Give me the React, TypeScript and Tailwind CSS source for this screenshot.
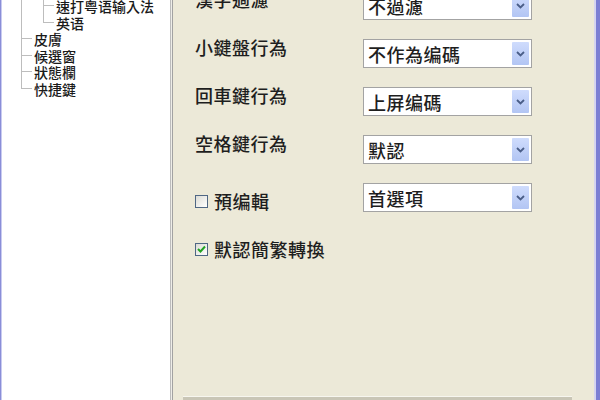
import React from "react";

const LINE = "border-[#bdbdbd]";

function TreeRow({ level, text, last }: { level: 1 | 2; text: string; last?: boolean }) {
  return (
    <div className="flex h-[16.5px] items-stretch">
      {level === 2 && <div className={`ml-[19px] w-[22px] border-l ${LINE}`} />}
      <div className={`${level === 1 ? "ml-[19px]" : ""} flex w-[12px] flex-col`}>
        <div className={`h-1/2 w-[11px] border-b border-l ${LINE}`} />
        <div className={`h-1/2 ${last ? "" : `border-l ${LINE}`}`} />
      </div>
      <span className="ml-[1px] whitespace-nowrap text-[14px] font-medium leading-[16.5px] text-[#1a1a1a]">{text}</span>
    </div>
  );
}

function Combo({ text }: { text: string }) {
  return (
    <div className="flex h-[29px] w-[169px] items-center border border-[#a3a3a3] bg-white pl-[4px] pr-[2px]">
      <span className="flex-1 whitespace-nowrap text-[18px] font-medium leading-[20px] tracking-[0.5px] text-[#1e1e1e]">{text}</span>
      <div className="flex h-[23px] w-[17px] items-center justify-center rounded-[1px] bg-gradient-to-b from-[#cfdcfd] to-[#b2c5f3]">
        <svg width="9" height="6" viewBox="0 0 9 6">
          <path d="M1 1 L4.5 4.5 L8 1" stroke="#4a5e88" strokeWidth="1.8" fill="none" />
        </svg>
      </div>
    </div>
  );
}

function SelectRow({ label, value }: { label: string; value: string }) {
  return (
    <div className="flex h-[48px] items-start">
      <div className="-mt-[2px] w-[168px] whitespace-nowrap text-[18px] font-medium leading-[20px] tracking-[0.5px] text-[#1e1e1e]">{label}</div>
      <Combo text={value} />
    </div>
  );
}

function Check({ checked }: { checked?: boolean }) {
  return (
    <div className="flex h-[13px] w-[13px] items-center justify-center border border-[#4f6784] bg-gradient-to-br from-[#dcdcd5] to-white">
      {checked && (
        <svg width="9" height="8" viewBox="0 0 9 8">
          <path d="M1 4 L3.5 6.5 L8 1.5" stroke="#22a322" strokeWidth="2" fill="none" />
        </svg>
      )}
    </div>
  );
}

export default function App() {
  return (
    <div className="flex h-[400px] w-[600px] overflow-hidden bg-[#ece9d8] font-['Noto_Sans_CJK_TC','Noto_Sans_CJK_SC',sans-serif]">
      <div className="w-[1px] bg-[#8a8ed8]" />
      <div className="w-[1px] bg-[#c9cbf0]" />
      <div className="w-[168px] bg-white">
        <div className="-mt-[2px] flex flex-col">
          <TreeRow level={2} text="速打粤语输入法" />
          <TreeRow level={2} text="英语" last />
          <TreeRow level={1} text="皮膚" />
          <TreeRow level={1} text="候選窗" />
          <TreeRow level={1} text="狀態欄" />
          <TreeRow level={1} text="快捷鍵" last />
        </div>
      </div>
      <div className="w-[3px] border-l border-r border-l-[#bcbcbc] border-r-[#a2a2a2] bg-[#eeede8]" />
      <div className="flex flex-1 flex-col">
        <div className="-mt-[9px] flex flex-col pl-[22px]">
          <SelectRow label="漢字過濾" value="不過濾" />
          <SelectRow label="小鍵盤行為" value="不作為编碼" />
          <SelectRow label="回車鍵行為" value="上屏编碼" />
          <SelectRow label="空格鍵行為" value="默認" />
          <div className="flex h-[48px] items-start">
            <div className="mt-[8px] flex w-[168px] items-center gap-[6px]">
              <Check />
              <span className="whitespace-nowrap text-[18px] font-medium leading-[20px] tracking-[0.5px] text-[#1e1e1e]">預编輯</span>
            </div>
            <Combo text="首選項" />
          </div>
          <div className="mt-[8px] flex items-center gap-[6px]">
            <Check checked />
            <span className="whitespace-nowrap text-[18px] font-medium leading-[20px] tracking-[0.5px] text-[#1e1e1e]">默認簡繁轉換</span>
          </div>
        </div>
        <div className="mt-auto ml-[10px] h-[4px] w-[389px] border-t border-[#f7f6ef] bg-[#c9c6b6]" />
      </div>
      <div className="w-[2px] bg-[#d4d4f0]" />
      <div className="w-[4px] bg-[#7b7fd3]" />
    </div>
  );
}
